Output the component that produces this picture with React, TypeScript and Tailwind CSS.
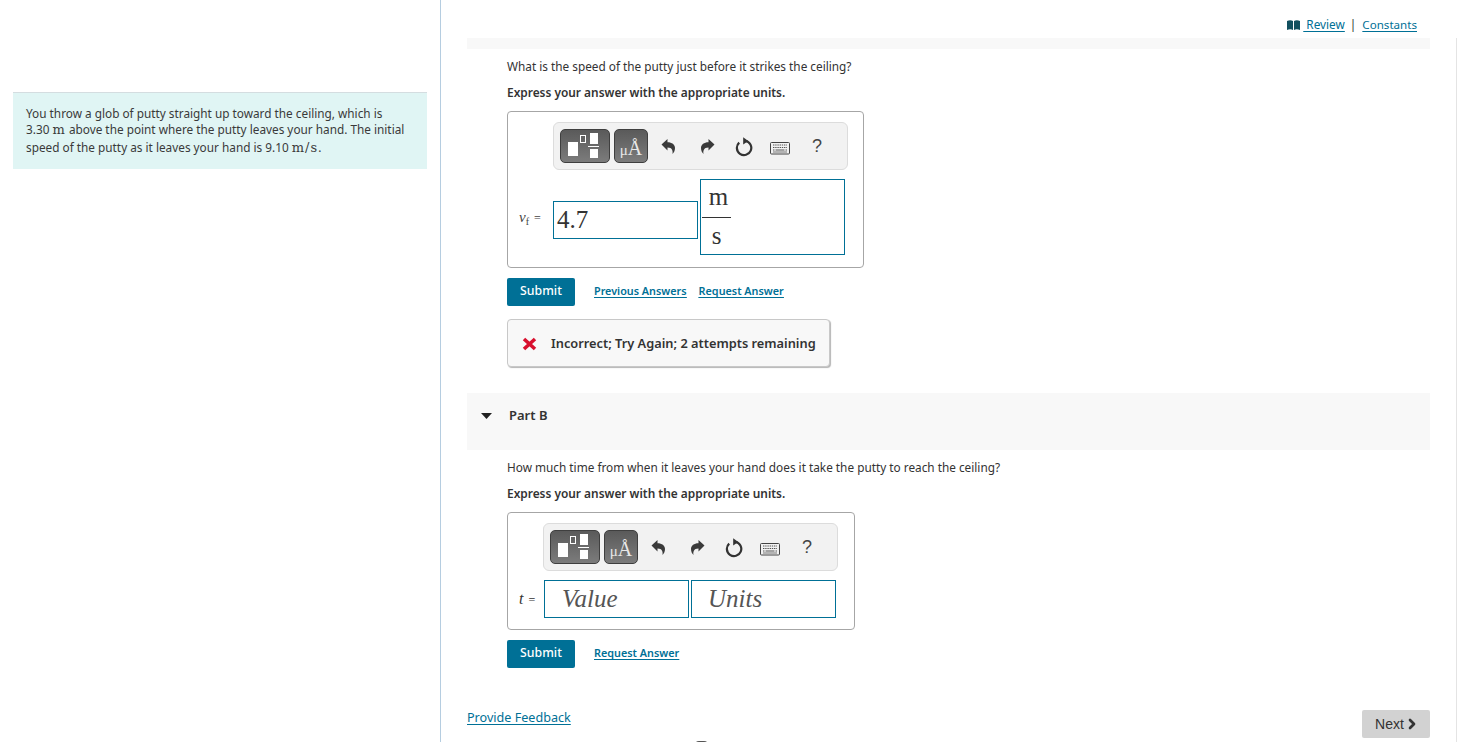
import { ChevronRight } from 'lucide-react';

const teal = 'text-[#007096]';
const darkBtn = 'h-[34px] rounded-[5px] border border-[#3f3f3f] bg-gradient-to-b from-[#5a5a5a] to-[#7c7c7c]';

function LayoutIcon() {
  return (
    <svg width="48" height="32" viewBox="1 1 48 32" className="block">
      <rect x="8" y="13" width="10" height="14" fill="#fff" />
      <rect x="20.5" y="6.5" width="5" height="7" fill="none" stroke="#fff" strokeWidth="1" />
      <rect x="30" y="4" width="8" height="11" fill="#fff" />
      <rect x="28" y="17" width="11" height="1" fill="#fff" />
      <rect x="30" y="20" width="8" height="9" fill="#fff" />
    </svg>
  );
}

function Toolbar() {
  return (
    <div className="h-[48px] w-[295px] rounded-[6px] border border-[#dcdcdc] bg-[#f2f2f2] flex items-center pl-[6px]">
      <button className={`w-[50px] ${darkBtn}`}>
        <LayoutIcon />
      </button>
      <button className={`ml-[4px] w-[34px] ${darkBtn} text-[#e8e8e8] font-['Liberation_Serif',serif] text-[20px] leading-[36px] text-center`}>
        <span className="text-[15px]">μ</span>Å
      </button>
      <svg width="16" height="17" viewBox="0 0 16 17" className="ml-[13px]">
        <path d="M0.5 6.5 6.5 1V4.2C11 4.2 14 6.5 14 10 14 12.5 13 14.5 11.5 16 12 13 11.5 9.5 6.5 9.5V12.5Z" fill="#3a3a3a" />
      </svg>
      <svg width="16" height="17" viewBox="0 0 16 17" className="ml-[22px]">
        <path d="M15.5 6.5 9.5 1V4.2C5 4.2 2 6.5 2 10 2 12.5 3 14.5 4.500 16 4 13 4.500 9.500 9.500 9.500V12.500Z" fill="#3a3a3a" />
      </svg>
      <svg width="18" height="20" viewBox="0 0 18 20" className="ml-[20px] mt-[2px]">
        <path d="M10.400 3.800A7.200 7.200 0 1 1 4.200 5.600" fill="none" stroke="#333" strokeWidth="2.200" />
        <path d="M8.200 0.300 13.200 3.900 8.200 7.400Z" fill="#333" />
      </svg>
      <svg width="20" height="13" viewBox="0 0 20 13" className="ml-[17px] mt-[4px]">
        <rect x="0.500" y="0.500" width="19" height="11.500" rx="1" fill="#f2f2f2" stroke="#444" />
        <path d="M3 3h14M3 5.500h14" stroke="#555" strokeWidth="1.200" strokeDasharray="1.400 .8" />
        <path d="M3 8h1.500M5.500 8h9M15.500 8H17" stroke="#555" strokeWidth="1.200" />
        <path d="M3 10h14" stroke="#777" strokeWidth="1" />
      </svg>
      <span className="ml-[22px] font-['Liberation_Sans',sans-serif] text-[18px] leading-none text-[#444]">?</span>
    </div>
  );
}

function SubmitRow({ previous }: { previous?: boolean }) {
  return (
    <div className="mt-[10px] flex items-center">
      <button className="w-[68px] h-[28px] rounded-[2px] bg-[#007096] text-white text-[12.300px] font-medium pb-[1px]">Submit</button>
      <div className={`ml-[19px] -mt-[1px] flex gap-[12px] text-[10.800px] font-semibold underline underline-offset-2 ${teal}`}>
        {previous && <a>Previous Answers</a>}
        <a>Request Answer</a>
      </div>
    </div>
  );
}

export default function App() {
  return (
    <div className="relative h-[742px] w-[1457px] overflow-hidden flex bg-white font-['Noto_Sans',sans-serif] text-[#333]">
      <aside className="w-[441px] shrink-0 border-r border-[#b5cde0] pt-[92px] pl-[13px] pr-[13px]">
        <div className="h-[77px] border-t border-[#d4dde0] bg-[#e0f5f4] pl-[13px] pt-[12px] text-[11.800px] leading-[16.400px] text-[#3a3a3a]">
          You throw a glob of putty straight up toward the ceiling, which is<br />
          3.30 <span className="font-['DejaVu_Serif',serif] text-[13px] tracking-[1px]">m</span> above the point where the putty leaves your hand. The initial<br />
          speed of the putty as it leaves your hand is 9.10 <span className="font-['DejaVu_Serif',serif] text-[13px] tracking-[1px]">m/s</span>.
        </div>
      </aside>

      <main className="w-[1015px] shrink-0 pl-[26px] pr-[26px] flex flex-col">
        <div className={`h-[38px] flex items-center justify-end pr-[13px] pt-[12px] text-[11.800px] ${teal}`}>
          <svg width="13" height="10" viewBox="0 0 13 10" className="mr-[3px]">
            <path d="M0 1C2 0 4.500 0 6 1V10C4.500 9 2 9 0 10ZM7 1C8.500 0 11 0 13 1V10C11 9 8.500 9 7 10Z" fill="#12505f" />
          </svg>
          <a className="underline underline-offset-2 whitespace-pre"> Review</a>
          <span className="ml-[5px] mr-[6px] text-[#333]">|</span>
          <a className="underline underline-offset-2 text-[11.600px]">Constants</a>
        </div>
        <div className="h-[11px] bg-[#f8f8f8]" />

        <div className="pl-[40px]">
          <p className="mt-[9px] h-[16px] text-[11.800px] leading-[16px]">What is the speed of the putty just before it strikes the ceiling?</p>
          <p className="mt-[10px] h-[16px] text-[11.900px] leading-[16px] font-semibold">Express your answer with the appropriate units.</p>

          <div className="mt-[11px] w-[357px] h-[157px] rounded-[4px] border border-[#a6a6a6] pt-[10px] pl-[45px]">
            <Toolbar />
            <div className="mt-[9px] -ml-[45px] flex items-start">
              <span className="ml-[11px] mt-[22px] w-[34px] h-[32px] leading-[32px] font-['Liberation_Serif',serif] text-[15px] text-[#444]">
                <i>v</i><sub className="text-[10px]">f</sub><span className="ml-[5px] text-[12px]">=</span>
              </span>
              <div className="mt-[22px] w-[145px] h-[38px] border border-[#007096] pl-[3px] font-['Liberation_Serif',serif] text-[25px] leading-[36px]">4.7</div>
              <div className="ml-[2px] w-[145px] h-[76px] border border-[#007096] font-['Liberation_Serif',serif] text-[25px] leading-none">
                <div className="w-[29px] ml-[1px] flex flex-col items-center">
                  <span className="h-[37px] leading-[34px] pl-[4px]">m</span>
                  <span className="w-full h-[1px] bg-[#333]" />
                  <span className="leading-[36px]">s</span>
                </div>
              </div>
            </div>
          </div>

          <SubmitRow previous />

          <div className="mt-[13px] w-[323px] h-[48px] rounded-[4px] border border-[#c8c8c8] bg-[#f8f8f8] shadow-[1px_1px_1px_#b5b5b5] flex items-center pl-[14px] pt-[1px] text-[12.800px] font-semibold">
            <svg width="15" height="14" viewBox="0 0 15 14" className="mr-[14px]">
              <path d="M2 2 13 12M13 2 2 12" stroke="#d8102e" strokeWidth="3.600" />
            </svg>
            Incorrect; Try Again; 2 attempts remaining
          </div>
        </div>

        <div className="mt-[26px] h-[57px] bg-[#f8f8f8] flex items-start pt-[14px] text-[13px] font-semibold leading-[16px]">
          <svg width="11" height="6" viewBox="0 0 11 6" className="ml-[14px] mt-[6px]">
            <path d="M0 0h11L5.500 6Z" fill="#222" />
          </svg>
          <span className="ml-[17px]">Part B</span>
        </div>

        <div className="pl-[40px]">
          <p className="mt-[9px] h-[16px] text-[11.800px] leading-[16px]">How much time from when it leaves your hand does it take the putty to reach the ceiling?</p>
          <p className="mt-[10px] h-[16px] text-[11.900px] leading-[16px] font-semibold">Express your answer with the appropriate units.</p>

          <div className="mt-[11px] w-[348px] h-[118px] rounded-[4px] border border-[#a6a6a6] pt-[10px] pl-[35px]">
            <Toolbar />
            <div className="mt-[9px] -ml-[35px] flex items-center">
              <span className="ml-[11px] w-[25px] font-['Liberation_Serif',serif] text-[16px] text-[#333]">
                <i>t</i><span className="ml-[5px] text-[12px]">=</span>
              </span>
              <div className="w-[145px] h-[38px] border border-[#007096] pl-[17px] font-['Liberation_Serif',serif] italic text-[25px] leading-[35px] text-[#555]">Value</div>
              <div className="ml-[2px] w-[145px] h-[38px] border border-[#007096] pl-[16px] font-['Liberation_Serif',serif] italic text-[25px] leading-[35px] text-[#555]">Units</div>
            </div>
          </div>

          <SubmitRow />
        </div>

        <div className="mt-[42px] flex items-start justify-between">
          <a className={`text-[12.600px] leading-[16px] underline underline-offset-2 ${teal}`}>Provide Feedback</a>
          <button className="w-[68px] h-[28px] rounded-[2px] bg-[#d2d2d2] flex items-center justify-center text-[14px] text-[#333] font-['Liberation_Sans',sans-serif]">
            Next<ChevronRight size={16} strokeWidth={4} className="-mr-[3px]" />
          </button>
        </div>
      </main>

      <div className="w-[1px] bg-[#e4e4e4] mt-[38px]" />
      <div className="absolute left-[695px] top-[741px] w-[13px] h-[4px] rounded-t-full bg-[#555]" />
    </div>
  );
}
